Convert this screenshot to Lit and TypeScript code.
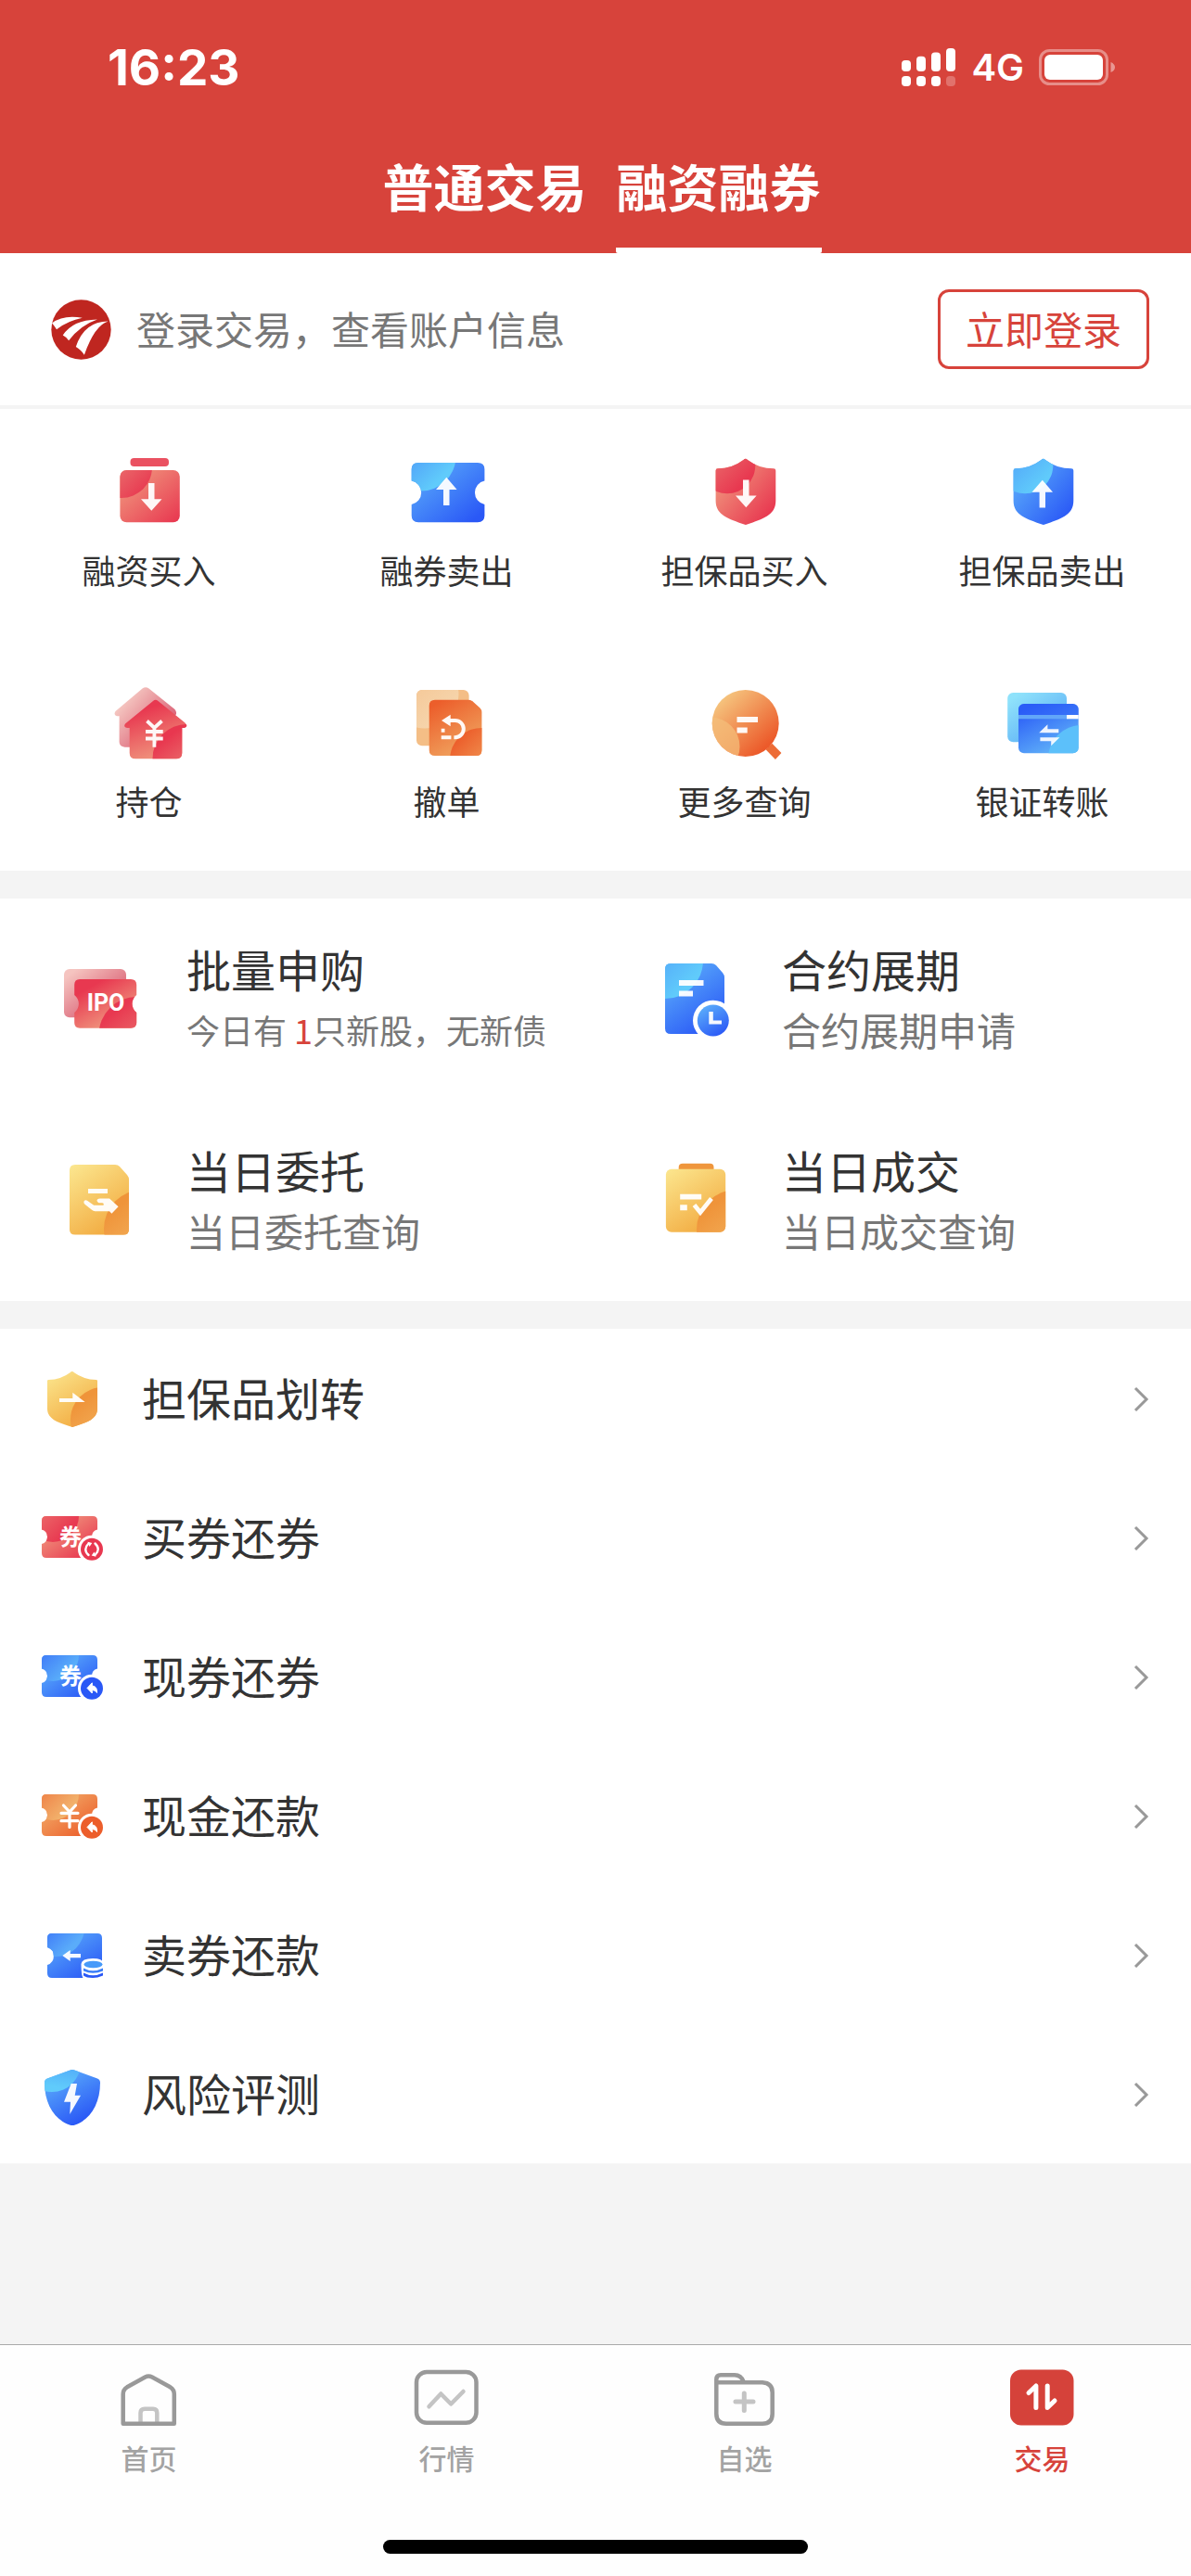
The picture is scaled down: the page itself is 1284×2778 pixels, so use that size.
import { LitElement, html, svg, css, TemplateResult, SVGTemplateResult } from "lit";
import { customElement, property, state } from "lit/decorators.js";

type Stop = [string, string];

/** Diagonal two-stop gradient, given in fractions of the painted shape. */
const grad = (id: string, [from, to]: Stop, x1 = 0, y1 = 0, x2 = 1, y2 = 1) => svg`
  <linearGradient id=${id} x1=${x1} y1=${y1} x2=${x2} y2=${y2}>
    <stop offset="0" stop-color=${from}></stop>
    <stop offset="1" stop-color=${to}></stop>
  </linearGradient>`;

const RED: Stop = ["#f1a283", "#e8354f"];
const RED_LOBE: Stop = ["#ea7470", "#e83850"];
const BLUE: Stop = ["#5fb4fb", "#2a58f6"];
const BLUE_LOBE: Stop = ["#4f9ef8", "#60cbfb"];
const ORANGE: Stop = ["#f2b06c", "#ec5e2b"];
const GOLD: Stop = ["#fbe58d", "#f2a93e"];
const GOLD_LOBE: Stop = ["#ef943a", "#f2ab55"];

const SHIELD =
  "M13.6 22.5Q13.6 20.3 15.8 20.3Q31 20.3 43.5 10.9Q45.7 8.6 48 10.9Q60.5 20.3 76 20.3Q78.3 20.3 78.3 22.5V55C78.3 71 64 74.500 47.500 80.600Q45.900 81.200 44.300 80.600C28 74.500 13.600 71 13.600 55Z";

const shield = (body: Stop, lobe: Stop, arrow: SVGTemplateResult) => svg`
  <defs>${grad("a", body, 0, 0.1, 0.9, 0.9)}${grad("b", lobe, 0.2, 0.2, 0.8, 0.8)}
    <clipPath id="c"><path d=${SHIELD}></path></clipPath></defs>
  <path d=${SHIELD} fill="url(#a)"></path>
  <circle cx="26" cy="17" r="30.300" fill="url(#b)" clip-path="url(#c)"></circle>
  ${arrow}`;

const TICKET =
  "M7 12H57Q62 12 62 17V26.500A8 8 0 0 0 62 42V52Q62 57 57 57H7Q2 57 2 52V42A8 8 0 0 0 2 26.500V17Q2 12 7 12Z";

const ticket = (body: Stop, lobe: Stop, badge: string, mark: SVGTemplateResult, sign: SVGTemplateResult) => svg`
  <defs>${grad("a", body, 0, 0.2, 0.8, 1)}${grad("b", lobe, 0.3, 0.3, 0.8, 0.8)}
    <clipPath id="c"><path d=${TICKET}></path></clipPath></defs>
  <path d=${TICKET} fill="url(#a)"></path>
  <circle cx="14" cy="12" r="28" fill="url(#b)" clip-path="url(#c)"></circle>
  ${mark}
  <circle cx="56" cy="47.700" r="15" fill="#fff"></circle>
  <circle cx="56" cy="47.700" r="12" fill=${badge}></circle>
  ${sign}`;

const quan = svg`<text class="mark" x="33" y="43" font-size="24">券</text>`;
const backSign = svg`<path fill="#fff" stroke="#fff" stroke-width="1" stroke-linejoin="round" d="M51 47.500L56.300 41.800V45Q62 45.300 61.500 52.500Q59.500 49.500 56.300 49.500V53Z"></path>`;

const ICONS: Record<string, { size: number; art: SVGTemplateResult }> = {
  "margin-buy": {
    size: 90,
    art: svg`
      <defs>${grad("a", RED)}${grad("b", RED_LOBE, 0.4, 0.4, 0.9, 0.9)}
        <clipPath id="c"><rect x="13.400" y="22" width="64.400" height="56.300" rx="7"></rect></clipPath></defs>
      <rect x="24.500" y="9" width="41.500" height="9" rx="4" fill="#ea5161"></rect>
      <rect x="13.400" y="22" width="64.400" height="56.300" rx="7" fill="url(#a)"></rect>
      <circle cx="15" cy="19" r="33" fill="url(#b)" clip-path="url(#c)"></circle>
      <path fill="#fff" fill-opacity=".95" d="M44 36H50.500V53.300H58.500L47.300 65.700L36 53.300H44Z"></path>`,
  },
  "short-sell": {
    size: 90,
    art: svg`
      <defs>${grad("a", BLUE, 0, 0, 0.9, 0.9)}${grad("b", BLUE_LOBE, 0.4, 0.4, 0.8, 0.8)}
        <clipPath id="c"><path d="M14 14H78Q85.400 14 85.400 21V33.500A13 13 0 0 0 85.400 59V71Q85.400 78.300 78 78.300H14Q6.700 78.300 6.700 71V59A13 13 0 0 0 6.700 33.500V21Q6.700 14 14 14Z"></path></clipPath></defs>
      <g clip-path="url(#c)">
        <rect x="6" y="14" width="80" height="65" fill="url(#a)"></rect>
        <circle cx="17" cy="7" r="37.500" fill="url(#b)"></circle>
      </g>
      <path fill="#fff" fill-opacity=".95" d="M41 60H47.500V43H55.600L44.300 29.700L33 43H41Z"></path>`,
  },
  "pledge-buy": {
    size: 90,
    art: shield(RED, RED_LOBE, svg`<path fill="#fff" fill-opacity=".95" d="M43 32.500H49.500V49.500H57.600L46.300 62.300L35 49.500H43Z"></path>`),
  },
  "pledge-sell": {
    size: 90,
    art: shield(BLUE, BLUE_LOBE, svg`<path fill="#fff" fill-opacity=".95" d="M41.600 62.500H48V45.700H56L44.800 32.700L33.500 45.700H41.600Z"></path>`),
  },
  holdings: {
    size: 90,
    art: svg`
      <defs>${grad("a", ["#f4c4bf", "#dc6478"], 0.2, 0.2, 0.8, 0.7)}${grad("b", ["#e83850", "#f09a80"], 0.3, 0.2, 0.6, 1)}${grad("d", ["#e8374f", "#ea6e6c"], 0.2, 0.2, 0.5, 0.6)}
        <clipPath id="c"><path d="M49 22Q51.600 19.500 54.500 22L83.500 45.500Q87.500 50 82.500 51H80.300V78Q80.300 84.300 74 84.300H30Q23.700 84.300 23.700 78V51H21.500Q16.500 50.500 19 46.500Z"></path></clipPath></defs>
      <path fill="url(#a)" d="M37.500 8.500Q41 6 44.500 8.500L72.500 31Q75 34 73.500 37H69V71.700H18.500Q12.600 71 12.600 66V38.300H10Q6 37 8.500 33Z"></path>
      <g clip-path="url(#c)">
        <rect x="16" y="18" width="72" height="68" fill="url(#b)"></rect>
        <circle cx="85.500" cy="84" r="37" fill="url(#d)"></circle>
      </g>
      <path fill="none" stroke="#fff" stroke-opacity=".95" stroke-width="3.800" d="M42.500 43.500L50.400 51L58.500 43.500M41 55H59.700M41 62.500H59.700M50.400 51V71.700"></path>`,
  },
  cancel: {
    size: 90,
    art: svg`
      <defs>${grad("a", ["#ec5e2b", "#f0a560"], 0.1, 0.1, 0.6, 1)}${grad("b", ["#ec5e2b", "#f09150"], 0.1, 0.2, 0.5, 0.6)}${grad("e", ["#f4be88", "#f6d6ae"], 0, 0, 0.8, 0.9)}
        <clipPath id="c"><path d="M32 20.700H68Q71 20.700 73 22.700L80.500 29.500Q82.400 31.500 82.400 34V75Q82.400 81 76.500 81H32Q25.700 81 25.700 75V27Q25.700 20.700 32 20.700Z"></path></clipPath>
        <clipPath id="d"><rect x="12" y="10" width="56.600" height="60.300" rx="6"></rect></clipPath></defs>
      <g clip-path="url(#d)">
        <rect x="12" y="10" width="57" height="61" fill="#f4be86"></rect>
        <circle cx="21" cy="15" r="36.500" fill="url(#e)"></circle>
      </g>
      <g clip-path="url(#c)">
        <rect x="25" y="20" width="58" height="62" fill="url(#a)"></rect>
        <circle cx="82" cy="85" r="34" fill="url(#b)"></circle>
      </g>
      <path fill="#fff" fill-opacity=".95" d="M39 43L48.700 36.700V49.300ZM38.700 51.700H42.500V55.700H38.700ZM38.700 59.200H49.400V63.200H38.700Z"></path>
      <path fill="none" stroke="#fff" stroke-opacity=".95" stroke-width="4" d="M48 43H53.700A9 9 0 0 1 53.700 61.200H52.400"></path>`,
  },
  query: {
    size: 90,
    art: svg`
      <defs>${grad("a", ["#f5c27c", "#ec5a2a"], 0.15, 0.15, 0.8, 0.85)}
        <clipPath id="c"><circle cx="45.700" cy="46" r="36"></circle></clipPath></defs>
      <path fill="#ed6c36" d="M74.400 67.700L84.400 78L77.900 85L67.500 74.300Z"></path>
      <circle cx="45.700" cy="46" r="36" fill="url(#a)"></circle>
      <circle cx="8" cy="71" r="31.500" fill="#f4bd79" fill-opacity=".75" clip-path="url(#c)"></circle>
      <path fill="#fff" fill-opacity=".95" d="M36.500 39H59V45H36.500ZM36.500 50.500H47.700V56.500H36.500Z"></path>`,
  },
  transfer: {
    size: 90,
    art: svg`
      <defs>${grad("a", ["#8fe2fb", "#62b4f6"], 0.1, 0.1, 0.7, 0.8)}${grad("b", ["#2a5cf7", "#5dacf8"], 0.1, 0.1, 0.6, 0.9)}
        <clipPath id="c"><rect x="19" y="25" width="64.700" height="53.300" rx="6"></rect></clipPath></defs>
      <rect x="7.200" y="13" width="63.800" height="53.300" rx="6" fill="url(#a)"></rect>
      <g clip-path="url(#c)">
        <rect x="19" y="25" width="65" height="54" fill="url(#b)"></rect>
        <rect x="19" y="25" width="65" height="12.300" fill="#2a5cf7" fill-opacity=".5"></rect>
        <circle cx="87" cy="84" r="36" fill="#5cc0fa"></circle>
        <rect x="19" y="37" width="53" height="4.300" fill="#62a6f9"></rect>
        <rect x="71" y="37" width="14" height="4.300" fill="#fff"></rect>
      </g>
      <path fill="#fff" fill-opacity=".9" d="M41.200 56.200L50.400 47.300V52.300H62.300V56.200ZM63.400 61.300L54.200 70.300V65.200H42.400V61.300Z"></path>`,
  },
  ipo: {
    size: 90,
    art: svg`
      <defs>${grad("a", ["#f5c4c0", "#d85a70"], 0.1, 0.1, 0.8, 0.8)}${grad("b", ["#e83850", "#f09a80"], 0.2, 0.2, 0.7, 0.9)}${grad("d", ["#e83850", "#ea6a6a"], 0.2, 0.2, 0.5, 0.6)}
        <clipPath id="c"><path d="M23 24H78Q84.200 24 84.200 30V41A12 12 0 0 0 84.200 60V71Q84.200 76.700 78 76.700H23Q17.200 76.700 17.200 71V60A12 12 0 0 0 17.200 41V30Q17.200 24 23 24Z"></path></clipPath></defs>
      <rect x="6" y="13" width="67" height="52.300" rx="6" fill="url(#a)"></rect>
      <g clip-path="url(#c)">
        <rect x="17" y="24" width="68" height="53" fill="url(#b)"></rect>
        <circle cx="84.500" cy="84" r="41" fill="url(#d)"></circle>
      </g>
      <text class="mark latin" x="51" y="58" font-size="25">IPO</text>`,
  },
  extend: {
    size: 90,
    art: svg`
      <defs>${grad("a", ["#5fb4fb", "#2a58f6"], 0.1, 0, 0.7, 1)}${grad("b", BLUE_LOBE, 0.3, 0.3, 0.8, 0.8)}
        <clipPath id="c"><path d="M18 7H62Q65 7 67 9L74 17Q76 19.500 76 22V77Q76 83 70 83H18Q12 83 12 77V13Q12 7 18 7Z"></path></clipPath></defs>
      <g clip-path="url(#c)">
        <rect x="12" y="7" width="64" height="76" fill="url(#a)"></rect>
        <circle cx="12" cy="4" r="41" fill="url(#b)"></circle>
      </g>
      <path fill="#fff" fill-opacity=".95" d="M27 25H53.500V31H27ZM27 36.500H42V42.500H27Z"></path>
      <circle cx="63.800" cy="68.500" r="21.800" fill="#fff"></circle>
      <circle cx="63.800" cy="68.500" r="17" fill="url(#a)"></circle>
      <path fill="#fff" fill-opacity=".95" d="M59.300 59H63.800V68.500H73V72.500H59.300Z"></path>`,
  },
  orders: {
    size: 90,
    art: svg`
      <defs>${grad("a", GOLD, 0.1, 0, 0.7, 1)}${grad("b", GOLD_LOBE, 0.2, 0.2, 0.5, 0.6)}
        <clipPath id="c"><path d="M18 7H61Q64 7 66 9L74 18Q76 20.500 76 23V77Q76 82.500 70 82.500H18Q12 82.500 12 77V13Q12 7 18 7Z"></path></clipPath></defs>
      <g clip-path="url(#c)">
        <rect x="12" y="7" width="64" height="76" fill="url(#a)"></rect>
        <circle cx="91" cy="76" r="42" fill="url(#b)"></circle>
      </g>
      <path fill="#fff" fill-opacity=".95" d="M32 33H53V38H32ZM27.500 46.500Q29 44.500 31 45.800L38.200 50.800H48.500Q49.500 48.600 47 48.300H43.500Q40.500 46 42 44.500Q43 43.600 45 43.600H55L64.600 52.200L57.400 59.800L55 57.200H39.500Q37.500 57 36 55.800L28.500 49.800Q26.800 48.300 27.500 46.500Z"></path>`,
  },
  deals: {
    size: 90,
    art: svg`
      <defs>${grad("a", GOLD, 0.1, 0, 0.7, 1)}${grad("b", GOLD_LOBE, 0.2, 0.2, 0.5, 0.6)}
        <clipPath id="c"><rect x="12.900" y="11.800" width="64.300" height="68" rx="6"></rect></clipPath></defs>
      <path fill="#ef963c" d="M26.700 13V10Q26.700 5.800 31 5.800H60.500Q64.500 5.800 64.500 10V13Z"></path>
      <g clip-path="url(#c)">
        <rect x="12" y="11" width="66" height="70" fill="url(#a)"></rect>
        <circle cx="89" cy="77" r="43" fill="url(#b)"></circle>
      </g>
      <path fill="#fff" fill-opacity=".95" d="M28.200 38.800H51.200V44.500H28.200ZM28.200 50.200H35.800V56.200H28.200Z"></path>
      <path fill="none" stroke="#fff" stroke-opacity=".95" stroke-width="4.800" d="M43.500 50.500L50 58.500L62 43.500"></path>`,
  },
  "pledge-move": {
    size: 70,
    art: svg`
      <defs>${grad("a", GOLD, 0.1, 0, 0.7, 1)}${grad("b", GOLD_LOBE, 0.2, 0.2, 0.5, 0.6)}
        <clipPath id="c"><path d="M8 16Q8 15 9.500 15Q23 14.500 32.500 7.200Q34.700 5 37 7.200Q47 14.500 60.500 15Q62 15 62 16V46C62 58 50 61 35 66C20 61 8 58 8 46Z"></path></clipPath></defs>
      <g clip-path="url(#c)">
        <rect x="8" y="5" width="54" height="62" fill="url(#a)"></rect>
        <circle cx="68" cy="58" r="35" fill="url(#b)"></circle>
      </g>
      <path fill="#fff" fill-opacity=".95" d="M21 35H35.300V28.700L48.700 39H21Z"></path>`,
  },
  "buy-return": {
    size: 70,
    art: ticket(RED, ["#ec6e6c", "#e83850"], "#e83850", quan, svg`
      <path fill="none" stroke="#fff" stroke-width="2.400" stroke-linecap="round" d="M52.500 54Q46 48 52.500 41.500M59.500 41.500Q66 47.500 59.500 54"></path>
      <path fill="#fff" d="M51.500 39.700L56.300 41L53.500 45ZM60.500 55.700L55.700 54.500L58.500 50.500Z"></path>`),
  },
  "stock-return": {
    size: 70,
    art: ticket(BLUE, ["#3b72f7", "#5aaefa"], "#2a58f6", quan, backSign),
  },
  "cash-repay": {
    size: 70,
    art: ticket(ORANGE, ["#ee7a42", "#f2b26c"], "#ec5e2b", svg`
      <path fill="none" stroke="#fff" stroke-width="3.200" stroke-linecap="round" d="M25.500 24L32 31L38.500 24M23 32.300H41M23 40.700H41M32 31V47.500"></path>`, backSign),
  },
  "sell-repay": {
    size: 70,
    art: svg`
      <defs>${grad("a", BLUE, 0, 0, 0.8, 1)}${grad("b", ["#3467f7", "#5aacfa"], 0.3, 0.3, 0.8, 0.8)}
        <clipPath id="c"><path d="M13 12H62Q67 12 67 17V55Q67 60 62 60H13Q8 60 8 55V46A10 10 0 0 0 8 27V17Q8 12 13 12Z"></path></clipPath></defs>
      <g clip-path="url(#c)">
        <rect x="8" y="12" width="60" height="48" fill="url(#a)"></rect>
        <circle cx="17" cy="6" r="31" fill="url(#b)"></circle>
      </g>
      <path fill="#fff" fill-opacity=".95" d="M24.300 36L32.700 30V34H44V38.300H32.700V42Z"></path>
      <path fill="#fff" d="M44.500 45Q45 39 57 39Q68 39 68 44V61H47Q44.500 58 44.500 45Z"></path>
      <ellipse cx="57.500" cy="45.500" rx="10" ry="3.800" fill="#479af9"></ellipse>
      <path fill="#3a7df8" d="M47 49.500Q57 55 68 49.500V52.500Q57 57 47 52.500Z"></path>
      <path fill="#2a58f6" d="M47 54.500Q57 60 68 54.500V57.500Q62 60 57 60Q50 60 47 57.500Z"></path>`,
  },
  risk: {
    size: 70,
    art: svg`
      <defs>${grad("a", ["#5fb4fb", "#2a58f6"], 0.2, 0, 0.7, 0.9)}${grad("b", ["#4c9cf8", "#60cbfb"], 0.6, 0.3, 0.5, 0.9)}
        <clipPath id="c"><path d="M32 9.700Q35 8.500 38 9.700L62 18.500Q65 19.700 65 23C65 46 54 63 38 68.500Q35 69.600 32 68.500C16 63 5 46 5 23Q5 19.700 8 18.500Z"></path></clipPath></defs>
      <g clip-path="url(#c)">
        <rect x="5" y="8" width="60" height="62" fill="url(#a)"></rect>
        <circle cx="13" cy="2" r="31" fill="url(#b)"></circle>
      </g>
      <path fill="#fff" fill-opacity=".95" d="M33.700 24H40L37.700 36.700H44L32.300 57L33 43.700H26Z"></path>`,
  },
  home: {
    size: 80,
    art: svg`
      <path fill="none" stroke="#c4c4c4" stroke-width="4.500" d="M30.500 67V56Q30.500 51.700 35 51.700H44Q48.300 51.700 48.300 56V67"></path>
      <path fill="none" stroke="#999" stroke-width="4.500" stroke-linejoin="round" d="M11.700 67.700V35.700Q11.700 31 16 28.300L35.500 17.500Q39.200 15.500 43 17.500L62.500 28.300Q66.800 31 66.800 35.700V67.700Z"></path>`,
  },
  market: {
    size: 80,
    art: svg`
      <rect x="7" y="12" width="64.500" height="54.700" rx="11" fill="none" stroke="#999" stroke-width="4.500"></rect>
      <path fill="none" stroke="#c4c4c4" stroke-width="4.500" stroke-linecap="round" stroke-linejoin="round" d="M20.500 49.300L33.300 35.500L44.200 46.500L57.500 33"></path>`,
  },
  watch: {
    size: 80,
    art: svg`
      <path fill="none" stroke="#999" stroke-width="4.500" stroke-linejoin="round" d="M9.300 23.300H59Q69.700 24 69.700 34V57Q69.700 67.700 59 67.700H20Q9.300 67.700 9.300 57V20Q9.300 15.300 14 15.300H29Q36 15.300 39 23"></path>
      <path fill="none" stroke="#c4c4c4" stroke-width="5" stroke-linecap="round" d="M39.300 35V53.500M30 44H49"></path>`,
  },
  trade: {
    size: 80,
    art: svg`
      <rect x="5" y="9.500" width="68.500" height="60" rx="12" fill="#d5423a"></rect>
      <path fill="none" stroke="#fff" stroke-width="5" stroke-linecap="round" stroke-linejoin="round" d="M25 34.500L32.900 27V50.500M45.200 27V50.500L53 43"></path>`,
  },
};

@customElement("trade-icon")
export class TradeIcon extends LitElement {
  @property() name = "";

  static styles = css`
    :host {
      display: block;
      flex: none;
    }
    .art {
      display: block;
    }
    .mark {
      fill: #fff;
      font-family: "Noto Sans CJK SC", sans-serif;
      font-weight: 700;
      text-anchor: middle;
    }
    .latin {
      font-family: Roboto, sans-serif;
    }
  `;

  render() {
    const icon = ICONS[this.name];
    if (!icon) return html``;
    const { size, art } = icon;
    return html`<svg class="art" width=${size} height=${size} viewBox="0 0 ${size} ${size}" aria-hidden="true">${art}</svg>`;
  }
}

interface Entry {
  icon: string;
  label: string;
}

const SHORTCUTS: Entry[] = [
  { icon: "margin-buy", label: "融资买入" },
  { icon: "short-sell", label: "融券卖出" },
  { icon: "pledge-buy", label: "担保品买入" },
  { icon: "pledge-sell", label: "担保品卖出" },
  { icon: "holdings", label: "持仓" },
  { icon: "cancel", label: "撤单" },
  { icon: "query", label: "更多查询" },
  { icon: "transfer", label: "银证转账" },
];

const FEATURES: (Entry & { note: TemplateResult; compact?: boolean })[] = [
  {
    icon: "ipo",
    label: "批量申购",
    note: html`今日有 <span class="count">1</span>只新股，无新债`,
    compact: true,
  },
  { icon: "extend", label: "合约展期", note: html`合约展期申请` },
  { icon: "orders", label: "当日委托", note: html`当日委托查询` },
  { icon: "deals", label: "当日成交", note: html`当日成交查询` },
];

const SERVICES: Entry[] = [
  { icon: "pledge-move", label: "担保品划转" },
  { icon: "buy-return", label: "买券还券" },
  { icon: "stock-return", label: "现券还券" },
  { icon: "cash-repay", label: "现金还款" },
  { icon: "sell-repay", label: "卖券还款" },
  { icon: "risk", label: "风险评测" },
];

const TABS: Entry[] = [
  { icon: "home", label: "首页" },
  { icon: "market", label: "行情" },
  { icon: "watch", label: "自选" },
  { icon: "trade", label: "交易" },
];

const ACCOUNTS = ["普通交易", "融资融券"];

@customElement("app-root")
export class AppRoot extends LitElement {
  @state() private account = 1;

  static styles = css`
    :host {
      display: flex;
      flex-direction: column;
      min-height: 100vh;
      background: #f4f4f4;
      color: #333;
      font-family: "Noto Sans CJK SC", sans-serif;
    }
    button {
      margin: 0;
      padding: 0;
      border: 0;
      background: none;
      color: inherit;
      font: inherit;
      cursor: pointer;
    }
    a {
      color: inherit;
      text-decoration: none;
    }

    .top {
      background: #d7433b;
      color: #fff;
    }
    .status {
      display: flex;
      align-items: center;
      justify-content: space-between;
      padding: 42px 82px 0 116px;
      font-family: Inter, sans-serif;
      line-height: 62px;
    }
    .time {
      font-size: 53px;
      font-weight: 700;
    }
    .radio {
      display: flex;
      align-items: center;
      gap: 16px;
      font-size: 40px;
      font-weight: 600;
    }
    .accounts {
      display: flex;
      justify-content: center;
      gap: 30px;
      padding: 54px 0 0 13px;
    }
    .account {
      box-sizing: border-box;
      height: 115px;
      padding: 0 1px 28px;
      border-bottom: 6px solid transparent;
      border-radius: 2px;
      font-size: 55px;
      font-weight: 700;
      line-height: 80px;
    }
    .account.active {
      border-bottom-color: #fff;
    }

    .login {
      display: flex;
      align-items: center;
      gap: 27px;
      padding: 39px 45px 39px 55px;
      border-bottom: 4px solid #f4f4f4;
      background: #fff;
    }
    .hint {
      flex: 1;
      margin: 0;
      padding-bottom: 3px;
      color: #777;
      font-size: 42px;
      line-height: 60px;
    }
    .enter {
      padding: 9px 27px 11px;
      border: 3px solid #d7433b;
      border-radius: 12px;
      color: #d7433b;
      font-size: 42px;
      line-height: 60px;
    }

    .shortcuts {
      display: grid;
      grid-template-columns: repeat(4, 1fr);
      grid-auto-rows: 249px;
      background: #fff;
    }
    .shortcut {
      display: flex;
      flex-direction: column;
      align-items: center;
      gap: 19px;
      padding-top: 44px;
      font-size: 36px;
      line-height: 40px;
    }

    .features {
      display: grid;
      grid-template-columns: repeat(2, 1fr);
      grid-auto-rows: 217px;
      margin: 30px 0;
      background: #fff;
    }
    .feature {
      display: flex;
      align-items: center;
      gap: 48px;
      padding: 0 0 2px 63px;
    }
    .name,
    .note {
      display: block;
      line-height: 64px;
    }
    .name {
      padding-bottom: 2px;
      font-size: 48px;
    }
    .note {
      color: #777;
      font-size: 42px;
    }
    .note.compact {
      font-size: 36px;
    }
    .count {
      color: #d7433b;
    }

    .services {
      margin: 0;
      padding: 0;
      background: #fff;
      list-style: none;
    }
    .service {
      display: flex;
      align-items: center;
      gap: 40px;
      min-height: 150px;
      padding: 0 45px 0 43px;
      font-size: 48px;
      line-height: 64px;
    }
    .title {
      flex: 1;
      padding-bottom: 4px;
    }

    .dock {
      margin-top: auto;
      padding-bottom: 24px;
      border-top: 1px solid #aaa;
      background: #fefefe;
    }
    .tabs {
      display: grid;
      grid-template-columns: repeat(4, 1fr);
      padding: 17px 0 69px;
    }
    .tab {
      display: flex;
      flex-direction: column;
      align-items: center;
      gap: 4px;
      color: #a3a3a3;
      font-size: 30px;
      font-weight: 500;
      line-height: 40px;
    }
    .tab.active {
      color: #d7433b;
    }
    .handle {
      width: 458px;
      height: 15px;
      margin: 0 auto;
      border-radius: 8px;
      background: #000;
    }
  `;

  private renderStatus() {
    const bars = [0, 1, 2, 3];
    return html`
      <div class="status">
        <span class="time">16:23</span>
        <span class="radio">
          <svg width="59" height="42" viewBox="0 0 59 42" aria-hidden="true">
            ${bars.map(
              (i) => svg`
                <rect x=${i * 16} y=${13 - i * 4.3} width="10" height=${12 + i * 4.3} rx="4" fill="#fff"></rect>
                <rect x=${i * 16} y="30" width="10" height="11" rx="4" fill="#fff" fill-opacity=${i === 3 ? 0.25 : 1}></rect>`
            )}
          </svg>
          4G
          <svg width="82" height="40" viewBox="0 0 82 40" aria-hidden="true">
            <rect x="1.500" y="1.500" width="72" height="36" rx="10" fill="none" stroke="#fff" stroke-opacity=".4" stroke-width="3"></rect>
            <rect x="6" y="6" width="63" height="27" rx="6" fill="#fff"></rect>
            <path d="M77.500 14Q82 16 82 19.500Q82 23 77.500 25Z" fill="#fff" fill-opacity=".45"></path>
          </svg>
        </span>
      </div>
    `;
  }

  render() {
    return html`
      <header class="top">
        ${this.renderStatus()}
        <nav class="accounts">
          ${ACCOUNTS.map(
            (name, i) => html`<button
              class="account ${i === this.account ? "active" : ""}"
              @click=${() => (this.account = i)}
            >${name}</button>`
          )}
        </nav>
      </header>

      <section class="login">
        <svg width="65" height="65" viewBox="23 22 194 194" aria-hidden="true">
          <circle cx="120" cy="119" r="96" fill="#bf2620"></circle>
          <path fill="#fff" d="M26 98Q62 70 124 81Q78 90 41 118Q32 104 26 98ZM61 137Q92 88 172 86Q118 104 80 154Q74 144 61 137ZM103 174Q130 92 207 92Q164 104 130 200Q122 186 103 174Z"></path>
        </svg>
        <p class="hint">登录交易，查看账户信息</p>
        <button class="enter">立即登录</button>
      </section>

      <nav class="shortcuts">
        ${SHORTCUTS.map(
          (s) => html`<a class="shortcut" href="#${s.icon}"><trade-icon name=${s.icon}></trade-icon>${s.label}</a>`
        )}
      </nav>

      <nav class="features">
        ${FEATURES.map(
          (f) => html`<a class="feature" href="#${f.icon}">
            <trade-icon name=${f.icon}></trade-icon>
            <span>
              <span class="name">${f.label}</span>
              <span class="note ${f.compact ? "compact" : ""}">${f.note}</span>
            </span>
          </a>`
        )}
      </nav>

      <ul class="services">
        ${SERVICES.map(
          (s) => html`<li>
            <a class="service" href="#${s.icon}">
              <trade-icon name=${s.icon}></trade-icon>
              <span class="title">${s.label}</span>
              <svg width="17" height="28" viewBox="0 0 17 28" aria-hidden="true">
                <path fill="none" stroke="#999" stroke-width="3" d="M2 3L14 15L2 27"></path>
              </svg>
            </a>
          </li>`
        )}
      </ul>

      <footer class="dock">
        <nav class="tabs">
          ${TABS.map(
            (t) => html`<a class="tab ${t.icon === "trade" ? "active" : ""}" href="#${t.icon}">
              <trade-icon name=${t.icon}></trade-icon>${t.label}
            </a>`
          )}
        </nav>
        <div class="handle"></div>
      </footer>
    `;
  }
}
